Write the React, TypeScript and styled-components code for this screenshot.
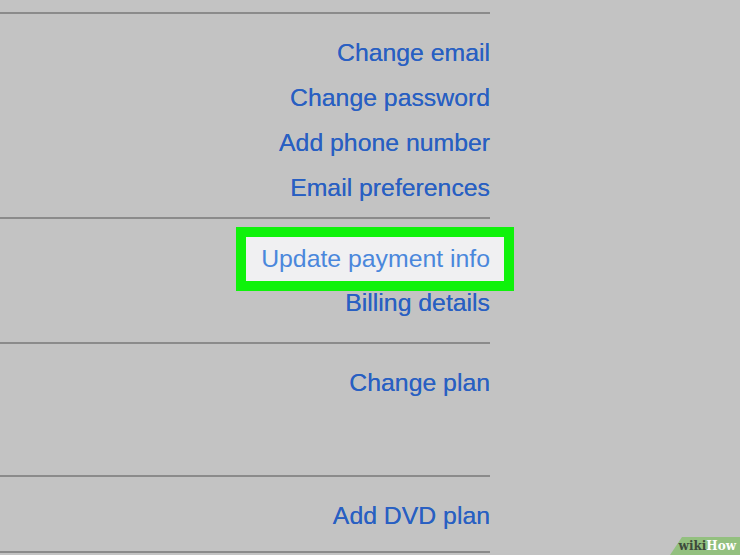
import React from 'react'
import styled, {createGlobalStyle} from 'styled-components'

const Global = createGlobalStyle`
  html, body {
    margin: 0;
    padding: 0;
    background: #c3c3c3;
    overflow: hidden;
  }
  body {
    font-family: "Liberation Sans", Arial, sans-serif;
  }
`;

const Page = styled.div`
  width: 740px;
  height: 555px;
  background: #c3c3c3;
  position: relative;
  overflow: hidden;
  padding-top: 12px;
  box-sizing: border-box;
`;

const Column = styled.div`
  width: 490px;
  display: flex;
  flex-direction: column;
`;

const Rule = styled.div`
  height: 2px;
  background: #8b8b8b;
`;

const Section = styled.div<{$top: number, $bottom: number}>`
  display: flex;
  flex-direction: column;
  align-items: flex-end;
  padding-top: ${p => p.$top}px;
  padding-bottom: ${p => p.$bottom}px;
`;

const Item = styled.div<{$h?: number}>`
  height: ${p => p.$h ?? 45}px;
  display: flex;
  align-items: center;
  font-size: 24.8px;
  color: #285fc2;
  white-space: nowrap;
  text-shadow: 0 0 0.4px rgba(40, 95, 194, 0.8);
`;

const Highlight = styled.span`
  position: relative;
  color: #4a87dc;
  text-shadow: none;
  &::before {
    content: "";
    position: absolute;
    left: -25px;
    right: -24px;
    top: -18px;
    bottom: -18px;
    border: 10px solid #0ff20b;
    background: #f0f0f2;
    z-index: 0;
  }
  span {
    position: relative;
    z-index: 1;
  }
`;

const Badge = styled.div`
  position: absolute;
  right: 0;
  bottom: 0;
  width: 70px;
  height: 18px;
  background: #93c07f;
  clip-path: polygon(12px 0, 100% 0, 100% 100%, 0 100%);
  display: flex;
  align-items: center;
  justify-content: flex-end;
  padding-right: 4px;
  box-sizing: border-box;
  font-family: "DejaVu Serif", "Liberation Serif", serif;
  font-weight: bold;
  font-size: 12px;
`;

const Wiki = styled.span`
  color: #3d4a3a;
`;

const How = styled.span`
  color: #ffffff;
`;

const accountLinks = ["Change email", "Change password", "Add phone number", "Email preferences"]

function App() {
    return (
        <Page>
            <Global/>
            <Column>
                <Rule/>
                <Section $top={16} $bottom={7}>
                    {accountLinks.map(t => <Item key={t}>{t}</Item>)}
                </Section>
                <Rule/>
                <Section $top={17} $bottom={17}>
                    <Item><Highlight><span>Update payment info</span></Highlight></Item>
                    <Item $h={44}>Billing details</Item>
                </Section>
                <Rule/>
                <Section $top={16} $bottom={70}>
                    <Item>Change plan</Item>
                </Section>
                <Rule/>
                <Section $top={16} $bottom={13}>
                    <Item>Add DVD plan</Item>
                </Section>
                <Rule/>
            </Column>
            <Badge><Wiki>wiki</Wiki><How>How</How></Badge>
        </Page>
    )
}

export default App;
